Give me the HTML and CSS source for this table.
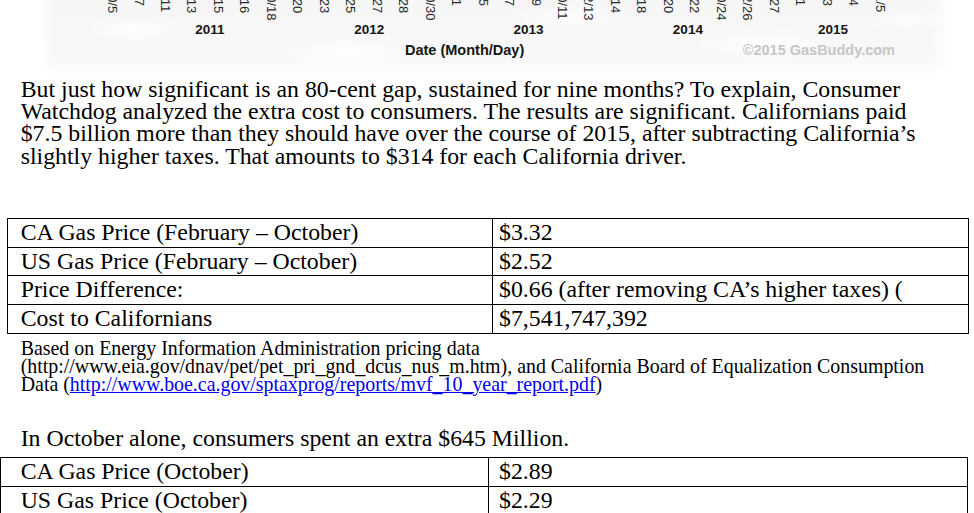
FILE: index.html
```html
<!DOCTYPE html>
<html lang="en">
<head>
<meta charset="utf-8">
<title>California gas price gap</title>
<link rel="stylesheet" href="styles.css">
</head>
<body>
<div class="chart">
  <div class="ticks-clip">
    <div class="ticks">
      <span class="tick"><span class="tick-text">10/5</span></span>
      <span class="tick"><span class="tick-text">2/7</span></span>
      <span class="tick"><span class="tick-text">3/11</span></span>
      <span class="tick"><span class="tick-text">4/13</span></span>
      <span class="tick"><span class="tick-text">6/15</span></span>
      <span class="tick"><span class="tick-text">8/16</span></span>
      <span class="tick"><span class="tick-text">10/18</span></span>
      <span class="tick"><span class="tick-text">2/20</span></span>
      <span class="tick"><span class="tick-text">3/23</span></span>
      <span class="tick"><span class="tick-text">5/25</span></span>
      <span class="tick"><span class="tick-text">6/27</span></span>
      <span class="tick"><span class="tick-text">8/28</span></span>
      <span class="tick"><span class="tick-text">10/30</span></span>
      <span class="tick"><span class="tick-text">1/1</span></span>
      <span class="tick"><span class="tick-text">2/5</span></span>
      <span class="tick"><span class="tick-text">4/7</span></span>
      <span class="tick"><span class="tick-text">6/9</span></span>
      <span class="tick"><span class="tick-text">10/11</span></span>
      <span class="tick"><span class="tick-text">12/13</span></span>
      <span class="tick"><span class="tick-text">2/14</span></span>
      <span class="tick"><span class="tick-text">4/18</span></span>
      <span class="tick"><span class="tick-text">6/20</span></span>
      <span class="tick"><span class="tick-text">8/22</span></span>
      <span class="tick"><span class="tick-text">10/24</span></span>
      <span class="tick"><span class="tick-text">12/26</span></span>
      <span class="tick"><span class="tick-text">2/27</span></span>
      <span class="tick"><span class="tick-text">5/1</span></span>
      <span class="tick"><span class="tick-text">7/3</span></span>
      <span class="tick"><span class="tick-text">9/4</span></span>
      <span class="tick"><span class="tick-text">11/5</span></span>
    </div>
  </div>
  <div class="years">
    <span class="year">2011</span>
    <span class="year">2012</span>
    <span class="year">2013</span>
    <span class="year">2014</span>
    <span class="year year-last">2015</span>
  </div>
  <div class="axis-row">
    <span class="axis-title">Date (Month/Day)</span>
    <span class="copyright">©2015 GasBuddy.com</span>
  </div>
</div>

<div class="doc">
  <p class="body-text intro">But just how significant is an 80-cent gap, sustained for nine months? To explain, Consumer Watchdog analyzed the extra cost to consumers. The results are significant. Californians paid $7.5 billion more than they should have over the course of 2015, after subtracting California’s slightly higher taxes. That amounts to $314 for each California driver.</p>

  <table class="data data-year">
    <colgroup><col class="c1"><col class="c2"></colgroup>
    <tr><td>CA Gas Price (February – October)</td><td>$3.32</td></tr>
    <tr><td>US Gas Price (February – October)</td><td>$2.52</td></tr>
    <tr><td>Price Difference:</td><td>$0.66 (after removing CA’s higher taxes) (</td></tr>
    <tr><td>Cost to Californians</td><td>$7,541,747,392</td></tr>
  </table>

  <p class="note">Based on Energy Information Administration pricing data (http://www.eia.gov/dnav/pet/pet_pri_gnd_dcus_nus_m.htm), and California Board of Equalization Consumption Data (<a href="#">http://www.boe.ca.gov/sptaxprog/reports/mvf_10_year_report.pdf</a>)</p>

  <p class="body-text lead">In October alone, consumers spent an extra $645 Million.</p>

  <table class="data data-month">
    <colgroup><col class="c1"><col class="c2"></colgroup>
    <tr><td>CA Gas Price (October)</td><td>$2.89</td></tr>
    <tr><td>US Gas Price (October)</td><td>$2.29</td></tr>
  </table>
</div>
</body>
</html>
```

FILE: styles.css
```css
html, body {
  margin: 0;
  padding: 0;
  background: #ffffff;
}

body {
  width: 974px;
  height: 513px;
  overflow: hidden;
  font-family: "Liberation Serif", "Times New Roman", serif;
  color: #000;
}

/* ---------- chart strip (bottom of a cropped chart image) ---------- */
.chart {
  margin-left: 40px;
  width: 910px;
  height: 76px;
  font-family: "Liberation Sans", Arial, sans-serif;
  background:
    linear-gradient(to right, #ffffff 0, rgba(255,255,255,0) 14px, rgba(255,255,255,0) 890px, #ffffff 910px),
    radial-gradient(ellipse 70px 22px at 95px 30px, rgba(255,255,255,0.9), rgba(255,255,255,0) 70%),
    radial-gradient(ellipse 90px 26px at 305px 52px, rgba(255,255,255,0.9), rgba(255,255,255,0) 70%),
    radial-gradient(ellipse 80px 20px at 525px 18px, rgba(255,255,255,0.8), rgba(255,255,255,0) 70%),
    radial-gradient(ellipse 100px 24px at 725px 44px, rgba(255,255,255,0.9), rgba(255,255,255,0) 70%),
    radial-gradient(ellipse 60px 18px at 865px 20px, rgba(255,255,255,0.8), rgba(255,255,255,0) 70%),
    linear-gradient(to bottom, #f6f6f6 0, #f8f8f8 58px, #ffffff 76px);
}

.ticks-clip {
  height: 22px;
  overflow: hidden;
}

.ticks {
  display: flex;
  margin-top: -12px;
  padding-left: 59.3px;
}

.tick {
  flex: none;
  width: 26.47px;
  display: flex;
  justify-content: center;
}

.tick-text {
  writing-mode: vertical-rl;
  font-size: 13px;
  line-height: 13px;
  color: #2a2a2a;
  white-space: nowrap;
}

.years {
  display: flex;
  padding-left: 90.35px;
  height: 16px;
}

.year {
  flex: none;
  width: 159.3px;
  text-align: center;
  font-weight: bold;
  font-size: 13.5px;
  line-height: 16px;
  color: #151515;
}

.year-last {
  width: 130.8px;
}

.axis-row {
  display: flex;
  align-items: baseline;
  padding: 2.5px 55px 0 365px;
  line-height: 18px;
}

.axis-title {
  font-weight: bold;
  font-size: 14.5px;
  color: #151515;
}

.copyright {
  margin-left: auto;
  font-weight: bold;
  font-size: 14.5px;
  color: #c6c6c6;
}

/* ---------- document body ---------- */
.doc {
  padding-left: 20.7px;
  width: 924px;
}

.body-text {
  margin: 0;
  font-size: 23.8px;
  line-height: 22.2px;
}

.intro {
  margin-top: 2px;
}

.lead {
  margin-top: 33.7px;
}

.note {
  margin: 6px 0 0;
  font-size: 19.9px;
  line-height: 17.9px;
}

.note a {
  color: #0000ee;
  text-decoration: underline;
}

.data {
  border-collapse: collapse;
  table-layout: fixed;
  font-size: 23.8px;
  line-height: 27.7px;
}

.data td {
  border: 1px solid #000;
  padding: 0 0 0 6px;
  white-space: nowrap;
  overflow: hidden;
  vertical-align: top;
}

.data-year {
  margin-top: 51.2px;
  margin-left: -13.7px;
  width: 961px;
}

.data-year .c1 { width: 485px; }
.data-year .c2 { width: 476px; }
.data-year td:first-child { padding-left: 12.7px; }

.data-month {
  margin-top: 7.6px;
  margin-left: -20.7px;
  width: 967px;
}

.data-month .c1 { width: 488px; }
.data-month .c2 { width: 479px; }
.data-month td:first-child { padding-left: 19.7px; }
.data-month td:last-child { padding-left: 10px; }
```
